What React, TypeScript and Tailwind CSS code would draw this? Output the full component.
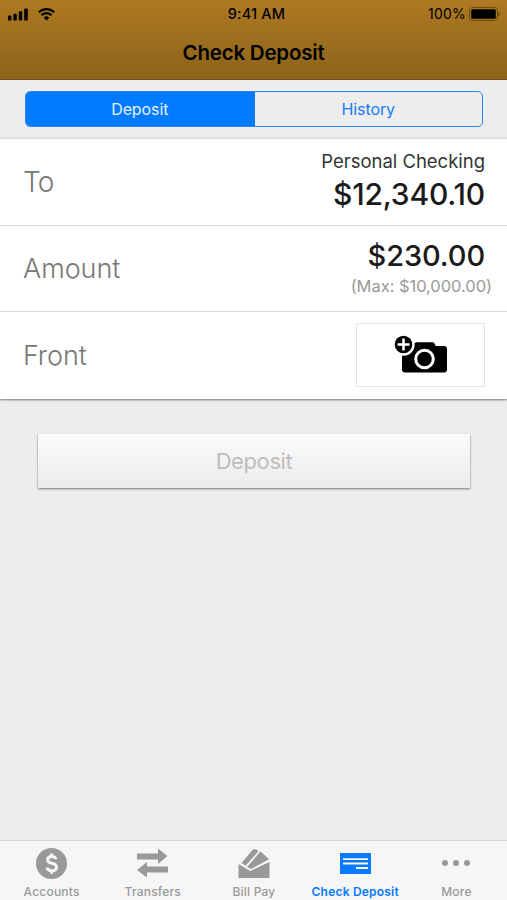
import type { ReactNode } from "react";

interface TabItemProps {
  label: string;
  active?: boolean;
  children: ReactNode;
}

function TabItem({ label, active = false, children }: TabItemProps) {
  return (
    <button
      type="button"
      className={`flex flex-1 flex-col items-center ${
        active ? "font-semibold text-[#087aff]" : "font-medium text-[#999999]"
      }`}
    >
      <span className="flex h-11 items-center">{children}</span>
      <span className="text-[12px] leading-[14px] tracking-[0.2px] whitespace-nowrap">
        {label}
      </span>
    </button>
  );
}

function StatusBar() {
  return (
    <div className="grid h-7 grid-cols-3 items-center pr-[7px] pl-2 text-[14px]">
      <div className="flex items-center gap-[10px]">
        <svg width="20" height="13" viewBox="0 0 20 13" fill="currentColor">
          <rect x="0" y="7.5" width="3.4" height="5" rx="1" />
          <rect x="5.4" y="5.7" width="3.4" height="6.8" rx="1" />
          <rect x="10.8" y="3.3" width="3.4" height="9.2" rx="1" />
          <rect x="16.2" y="0.5" width="3.6" height="12" rx="1" />
        </svg>
        <svg width="17" height="13" viewBox="0 0 17 13" fill="none" stroke="currentColor">
          <path d="M0.8 4.2a11 11 0 0 1 15.4 0" strokeWidth="2.2" />
          <path d="M3.5 7.2a7.1 7.1 0 0 1 10 0" strokeWidth="2.2" />
          <path d="M5.7 9.7a4 4 0 0 1 5.6 0L8.5 12.5z" fill="currentColor" stroke="none" />
        </svg>
      </div>
      <span className="pl-[5px] text-center text-[14.5px] font-medium tracking-[0.2px]">9:41 AM</span>
      <div className="flex items-center justify-end gap-[3px]">
        <span className="-mt-px tracking-[0.2px]">100%</span>
        <svg width="31" height="14" viewBox="0 0 31 14">
          <rect x="0.5" y="0.5" width="28" height="13" rx="3" fill="none" stroke="#000" strokeOpacity="0.35" />
          <rect x="2.2" y="2.2" width="24.6" height="9.6" rx="1.5" fill="#000" />
          <path d="M29.5 4.8q3 2.2 0 4.4z" fillOpacity="0.4" />
        </svg>
      </div>
    </div>
  );
}

function CameraIcon() {
  return (
    <svg width="54" height="40" viewBox="0 0 54 40">
      <path
        d="M11 11h6l3.5-3q1-.8 2.5-.8h15.5q1.5 0 2 1.3l1.2 2.5h8.3q3 0 3 3v20.500q0 3-3 3H11q-3 0-3-3V14q0-3 3-3z"
        fill="#000"
      />
      <circle cx="9.5" cy="9.5" r="11.2" fill="#fff" />
      <circle cx="9.5" cy="9.5" r="8.8" fill="#000" />
      <path d="M9.5 3.5v12M3.5 9.5h12" stroke="#fff" strokeWidth="2.5" />
      <circle cx="30.5" cy="24" r="8.8" fill="none" stroke="#fff" strokeWidth="3" />
    </svg>
  );
}

export default function App() {
  return (
    <div className="flex h-[900px] w-[507px] flex-col overflow-hidden bg-[#ededed] font-['Inter',sans-serif]">
      <header className="h-20 shrink-0 border-b border-[#705020] bg-linear-to-b from-[#ae7921] to-[#8b631b] text-black">
        <StatusBar />
        <h1 className="text-center text-[20.5px] leading-[49px] font-semibold tracking-[-0.2px]">
          Check Deposit
        </h1>
      </header>

      <div className="h-[58px] shrink-0 px-[25px] pt-[11px]">
        <div className="flex h-9 w-[458px] overflow-hidden rounded-[5px] border-[1.5px] border-[#2b87f3] text-[16px] tracking-[-0.1px]">
          <button type="button" className="flex-1 bg-[#007aff] pr-px text-[#e5f1ff]">
            Deposit
          </button>
          <button type="button" className="flex-1 text-[#147cf5]">
            History
          </button>
        </div>
      </div>

      <main className="h-[261px] shrink-0 border-t border-[#d9d9d9] bg-white shadow-[0_1px_2px_#777]">
        <section className="flex h-[87px] items-center justify-between border-b border-[#d9d9d9] pr-[22px] pl-[23px]">
          <span className="text-[28px] font-light tracking-[-0.8px] text-[#777]">To</span>
          <div className="text-right text-[#1b1b1b]">
            <div className="text-[18.5px] leading-[24px] tracking-[-0.02px] text-[#333]">
              Personal Checking
            </div>
            <div className="text-[30px] leading-[42px] font-medium tracking-[-0.2px]">$12,340.10</div>
          </div>
        </section>
        <section className="flex h-[86px] items-center justify-between border-b border-[#d9d9d9] pr-[15px] pl-[23px]">
          <span className="pt-px text-[27px] font-light tracking-[-0.05px] text-[#777]">Amount</span>
          <div className="text-right">
            <div className="pr-[7px] text-[29px] leading-[35px] font-medium tracking-[-0.1px] text-[#1b1b1b]">
              $230.00
            </div>
            <div className="text-[16.5px] leading-[26px] tracking-[-0.05px] text-[#999]">
              (Max: $10,000.00)
            </div>
          </div>
        </section>
        <section className="flex h-[87px] items-center justify-between pr-[22px] pl-[23px]">
          <span className="pt-px text-[27px] font-light tracking-[-0.1px] text-[#777]">Front</span>
          <button
            type="button"
            aria-label="Add front photo"
            className="mb-px flex h-16 w-[129px] items-center justify-center border-[1.5px] border-[#e5e5e5]"
          >
            <CameraIcon />
          </button>
        </section>
      </main>

      <div className="flex-1 pt-[35px] pr-[37px] pl-[38px]">
        <button
          type="button"
          className="h-[54px] w-full bg-linear-to-b from-[#fbfbfb] to-[#ebebeb] text-[22px] tracking-[-0.4px] text-[#bebebe] shadow-[0_1px_2px_#777]"
        >
          Deposit
        </button>
      </div>

      <nav className="flex h-[60px] shrink-0 border-t border-[#d6d6d6] bg-[#f6f6f6] pl-px">
        <TabItem label="Accounts">
          <svg width="31" height="31" viewBox="0 0 31 31">
            <circle cx="15.5" cy="15.5" r="15.5" fill="currentColor" />
            <path
              d="M19.8 11.200q-.5-2.700-4-2.700-4.200 0-4.200 3.200 0 2.500 4.200 3.600 4.700 1.100 4.700 4 0 3.500-4.600 3.500-4.400 0-4.900-3.200M15.700 5.500v3M15.700 22.500v3.200"
              fill="none"
              stroke="#f6f6f6"
              strokeWidth="3"
            />
          </svg>
        </TabItem>
        <TabItem label="Transfers">
          <svg width="31" height="30" viewBox="0 0 31 30" fill="currentColor">
            <path d="M0 5.500h21V0.500l9.500 7.500-9.500 8v-4.500H0z" />
            <path d="M31 18.500H10V14L0 22l10 7.500v-5h21z" />
          </svg>
        </TabItem>
        <TabItem label="Bill Pay">
          <svg width="32" height="29" viewBox="0 0 32 29" fill="currentColor">
            <path d="M0.500 14.500L12 21.500 31.500 13v16H0.500z" />
            <path d="M3.500 14L14 1.500q.6-.7 1.500-.9L18 0.200l2.500 2L7.500 16.800z" />
            <path d="M9 18L21.800 3.300q.8-.8 1.600-.1L31.200 10.200 13.500 20z" />
            <path d="M0.500 14L12.500 21.200 32 11.500" fill="none" stroke="#f6f6f6" strokeWidth="1.500" />
          </svg>
        </TabItem>
        <TabItem label="Check Deposit" active>
          <svg width="31" height="21" viewBox="0 0 31 21">
            <path d="M0 0h31v21H0z" fill="currentColor" />
            <path d="M3 6.200h25M3 10.500h25M16 15h12" stroke="#f6f6f6" strokeWidth="1.800" />
          </svg>
        </TabItem>
        <TabItem label="More">
          <svg width="28" height="6" viewBox="0 0 28 6" fill="currentColor">
            <circle cx="3" cy="3" r="3" />
            <circle cx="14" cy="3" r="3" />
            <circle cx="25" cy="3" r="3" />
          </svg>
        </TabItem>
      </nav>
    </div>
  );
}
